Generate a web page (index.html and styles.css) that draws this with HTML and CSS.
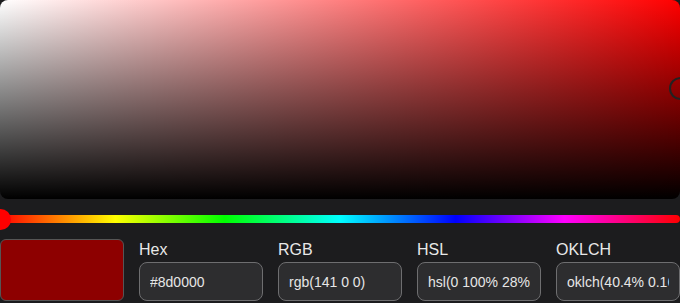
FILE: index.html
```html
<!DOCTYPE html>
<html lang="en">
<head>
  <meta charset="UTF-8" />
  <meta name="viewport" content="width=device-width, initial-scale=1.0" />
  <title>Color Picker</title>
  <link rel="stylesheet" href="styles.css">
</head>
<body>
  <div class="picker">
    <div class="area">
      <div class="area-marker" style="left: 100%; top: 44.7%;"></div>
    </div>
    <div class="hue">
      <div class="hue-bar"></div>
      <div class="hue-thumb" style="left: 0%;"></div>
    </div>
    <div class="values">
      <div class="swatch" style="background: #8d0000;"></div>
      <label class="field">
        <span class="field-label">Hex</span>
        <input type="text" value="#8d0000">
      </label>
      <label class="field">
        <span class="field-label">RGB</span>
        <input type="text" value="rgb(141 0 0)">
      </label>
      <label class="field">
        <span class="field-label">HSL</span>
        <input type="text" value="hsl(0 100% 28%)">
      </label>
      <label class="field">
        <span class="field-label">OKLCH</span>
        <input type="text" value="oklch(40.4% 0.165 29.2)">
      </label>
    </div>
  </div>
</body>
</html>
```

FILE: styles.css
```css
* {
  box-sizing: border-box;
}
html, body {
  overflow: hidden;
}
body {
  margin: 0;
  background: #1c1c1e;
  font-family: 'Liberation Sans', Arial, sans-serif;
  color: #e8e8e8;
}
.picker {
  width: 680px;
  display: flex;
  flex-direction: column;
}
.area {
  position: relative;
  height: 199px;
  border-radius: 8px;
  background:
    linear-gradient(to top, #000, rgba(0, 0, 0, 0)),
    linear-gradient(to right, #fff, #f00);
}
.area-marker {
  position: absolute;
  width: 23px;
  height: 23px;
  margin: -11.5px 0 0 -11.5px;
  border: 2px solid #222;
  border-radius: 50%;
}
.hue {
  position: relative;
  height: 20px;
  margin-top: 10px;
}
.hue-bar {
  margin-top: 6px;
  height: 8px;
  border-radius: 4px;
  background: linear-gradient(to right, #f00, #ff0 17%, #0f0 33%, #0ff 50%, #00f 67%, #f0f 83%, #f00);
}
.hue-thumb {
  position: absolute;
  top: 0;
  width: 21px;
  height: 21px;
  margin-left: -10px;
  border-radius: 50%;
  background: #f00;
}
.values {
  display: grid;
  grid-template-columns: repeat(5, 124px);
  gap: 15px;
  margin-top: 10px;
}
.swatch {
  height: 62px;
  border: 1px solid #555;
  border-radius: 6px;
}
.field {
  display: flex;
  flex-direction: column;
}
.field-label {
  font-size: 16px;
  line-height: 21px;
  margin-bottom: 2px;
}
.field input {
  width: 100%;
  height: 39px;
  padding: 0 10px;
  border: 1px solid #6e6e70;
  border-radius: 8px;
  background: #2d2d2f;
  color: #e6e6e6;
  font-family: 'Liberation Sans', Arial, sans-serif;
  font-size: 14px;
  outline: none;
}
```
